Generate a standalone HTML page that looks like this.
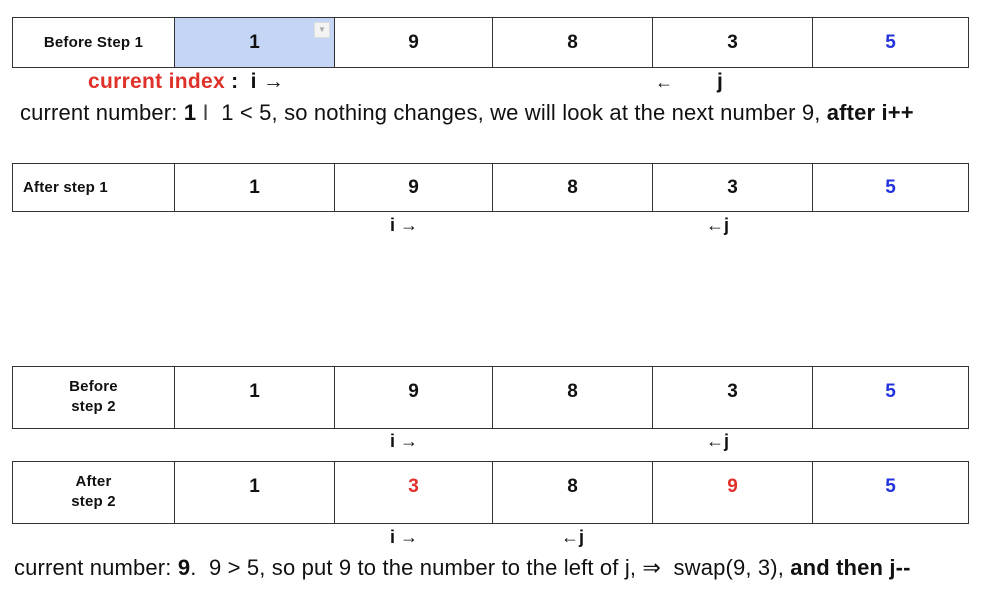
<!DOCTYPE html>
<html><head><style>
body{margin:0;width:987px;height:597px;background:#fff;position:relative;overflow:hidden;font-family:"Liberation Sans",Arial,sans-serif;color:#111}
.t{position:absolute;left:12px;width:957px;border:1px solid #333;box-sizing:border-box;display:flex}
.t div{border-left:1px solid #333;box-sizing:border-box;display:flex;justify-content:center;font-weight:bold;font-size:19px;text-align:center}
.t div:first-child{border-left:none;width:161px;font-size:15px;letter-spacing:0.2px}
.c{width:160px}.c2{width:158px}
.a{position:absolute;font-weight:bold;font-size:18px;white-space:nowrap}
.p{position:absolute;font-size:22px;letter-spacing:0.15px;white-space:nowrap}
</style></head><body>
<div class="t" style="top:17px;height:51px;align-items:stretch">
<div style="align-items:center">Before Step 1</div>
<div class="c" style="background:#c4d5f5;align-items:center;position:relative">1<span style="position:absolute;right:4px;top:4px;width:14px;height:14px;background:#f3f3f3;border:1px solid #ddd;font-size:8px;color:#aaa;line-height:14px">▼</span></div>
<div class="c2" style="align-items:center">9</div>
<div class="c" style="align-items:center">8</div>
<div class="c" style="align-items:center">3</div>
<div class="c" style="align-items:center;color:#2233dd;flex:1">5</div>
</div>
<div class="a" style="left:88px;top:70px;font-size:21px;letter-spacing:0.3px"><span style="color:#e0302a">current index</span> :&nbsp; i <span style="font-weight:normal">→</span></div>
<div class="a" style="left:655px;top:72px;font-size:18px;font-weight:normal">←</div>
<div class="a" style="left:717px;top:70px;font-size:21px">j</div>
<div class="p" style="left:20px;top:100px">current number: <b>1</b><span style="color:#444">&nbsp;I&nbsp;</span> 1 &lt; 5, so nothing changes, we will look at the next number 9, <b>after i++</b></div>

<div class="t" style="top:163px;height:49px">
<div style="align-items:center;justify-content:flex-start;padding-left:10px">After step 1</div>
<div class="c" style="align-items:center">1</div>
<div class="c2" style="align-items:center">9</div>
<div class="c" style="align-items:center">8</div>
<div class="c" style="align-items:center">3</div>
<div class="c" style="align-items:center;color:#2233dd;flex:1">5</div>
</div>
<div class="a" style="left:390px;top:215px">i <span style="font-weight:normal">→</span></div>
<div class="a" style="left:706px;top:215px"><span style="font-weight:normal">←</span>j</div>

<div class="t" style="top:366px;height:63px">
<div style="padding-top:10px;line-height:20px">Before<br>step 2</div>
<div class="c" style="padding-top:14px">1</div>
<div class="c2" style="padding-top:14px">9</div>
<div class="c" style="padding-top:14px">8</div>
<div class="c" style="padding-top:14px">3</div>
<div class="c" style="padding-top:14px;color:#2233dd;flex:1">5</div>
</div>
<div class="a" style="left:390px;top:431px">i <span style="font-weight:normal">→</span></div>
<div class="a" style="left:706px;top:431px"><span style="font-weight:normal">←</span>j</div>

<div class="t" style="top:461px;height:63px">
<div style="padding-top:10px;line-height:20px">After<br>step 2</div>
<div class="c" style="padding-top:14px">1</div>
<div class="c2" style="padding-top:14px;color:#e0302a">3</div>
<div class="c" style="padding-top:14px">8</div>
<div class="c" style="padding-top:14px;color:#e0302a">9</div>
<div class="c" style="padding-top:14px;color:#2233dd;flex:1">5</div>
</div>
<div class="a" style="left:390px;top:527px">i <span style="font-weight:normal">→</span></div>
<div class="a" style="left:561px;top:527px"><span style="font-weight:normal">←</span>j</div>
<div class="p" style="left:14px;top:555px">current number: <b>9</b>.&nbsp; 9 &gt; 5, so put 9 to the number to the left of j, ⇒&nbsp; swap(9, 3), <b>and then j--</b></div>
</body></html>
